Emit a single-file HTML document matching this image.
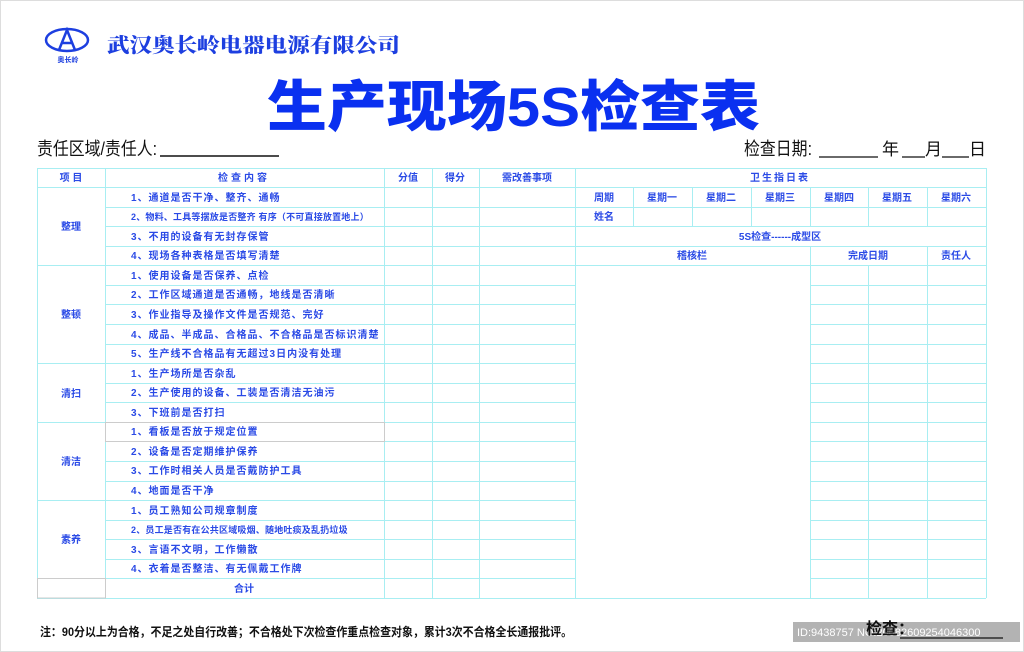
<!DOCTYPE html>
<html><head><meta charset="utf-8"><style>
html,body{margin:0;padding:0;background:#fff;}
svg{display:block}
.t{font-family:"Liberation Sans","Noto Sans CJK SC",sans-serif;fill:#2a4ae6;font-size:10px;font-weight:bold}
.c{text-anchor:middle}
</style></head><body>
<svg width="1024" height="652" viewBox="0 0 1024 652" xmlns="http://www.w3.org/2000/svg">
<rect x="0" y="0" width="1024" height="652" fill="#fff"/>
<rect x="0.5" y="0.5" width="1023" height="651" fill="none" stroke="#ddd"/>
<!-- logo -->
<ellipse cx="67" cy="40" rx="21" ry="11" fill="none" stroke="#1d3fe0" stroke-width="2.5"/>
<path d="M59 50 L67 30 L75 50 M62 43 L72 43" fill="none" stroke="#1d3fe0" stroke-width="2.5"/>
<text x="68" y="62" class="c" style="font-family:'Noto Sans CJK SC',sans-serif;font-size:7px;fill:#1d3fe0;font-weight:bold">奥长岭</text>
<text x="107" y="52" style="font-family:'Noto Serif CJK SC',serif;font-size:20px;font-weight:900;fill:#1d3fe0" textLength="293" lengthAdjust="spacingAndGlyphs">武汉奥长岭电器电源有限公司</text>
<text x="267" y="126" style="font-family:'Liberation Sans','Noto Sans CJK SC',sans-serif;font-size:55px;font-weight:900;fill:#0a30f0" textLength="493" lengthAdjust="spacingAndGlyphs">生产现场5S检查表</text>
<text x="37" y="155" style="font-family:'Liberation Sans','Noto Sans CJK SC',sans-serif;font-size:18px;fill:#111" textLength="120" lengthAdjust="spacingAndGlyphs">责任区域/责任人:</text>
<line x1="160" y1="156" x2="279" y2="156" stroke="#111" stroke-width="1.5"/>
<text x="744" y="155" style="font-family:'Liberation Sans','Noto Sans CJK SC',sans-serif;font-size:18px;fill:#111" textLength="68" lengthAdjust="spacingAndGlyphs">检查日期:</text>
<line x1="819" y1="157" x2="878" y2="157" stroke="#111" stroke-width="1.2"/>
<text x="882" y="155" style="font-family:'Noto Sans CJK SC',sans-serif;font-size:17px;fill:#111">年</text>
<line x1="902" y1="157" x2="925" y2="157" stroke="#111" stroke-width="1.2"/>
<text x="925" y="155" style="font-family:'Noto Sans CJK SC',sans-serif;font-size:17px;fill:#111">月</text>
<line x1="942" y1="157" x2="969" y2="157" stroke="#111" stroke-width="1.2"/>
<text x="969" y="155" style="font-family:'Noto Sans CJK SC',sans-serif;font-size:17px;fill:#111">日</text>

<g stroke="#a8eef2" stroke-width="1" fill="none">
<line x1="37" y1="168.5" x2="986" y2="168.5"/>
<line x1="37" y1="187.5" x2="986" y2="187.5"/>
<line x1="37" y1="598.5" x2="986" y2="598.5"/>
<path d="M105 207.5H575M105 226.5H575M105 246.5H575M37 265.5H575M105 285.5H575M105 304.5H575M105 324.5H575M105 344.5H575M37 363.5H575M105 383.5H575M105 402.5H575M37 422.5H575M105 441.5H575M105 461.5H575M105 481.5H575M37 500.5H575M105 520.5H575M105 539.5H575M105 559.5H575M37 578.5H575"/>
<path d="M575 207.5H986M575 226.5H986M575 246.5H986M575 265.5H986"/>
<path d="M810 285.5H986M810 304.5H986M810 324.5H986M810 344.5H986M810 363.5H986M810 383.5H986M810 402.5H986M810 422.5H986M810 441.5H986M810 461.5H986M810 481.5H986M810 500.5H986M810 520.5H986M810 539.5H986M810 559.5H986M810 578.5H986"/>
<path d="M37.5 168V598M105.5 168V598M384.5 168V598M432.5 168V598M479.5 168V598M575.5 168V598M986.5 168V598"/>
<path d="M633.5 187V226M692.5 187V226M751.5 187V226M810.5 187V226M868.5 187V226M927.5 187V226"/>
<path d="M810.5 246V598M927.5 246V598M868.5 265V598"/>
</g>
<rect x="105.5" y="422.5" width="279" height="19" fill="none" stroke="#ccc"/>
<rect x="37.5" y="578.5" width="68" height="19.5" fill="none" stroke="#ccc"/>

<text class="t c" x="71" y="181">项 目</text>
<text class="t c" x="244" y="181" style="letter-spacing:3px">检查内容</text>
<text class="t c" x="408" y="181">分值</text>
<text class="t c" x="455" y="181">得分</text>
<text class="t c" x="527" y="181">需改善事项</text>
<text class="t c" x="780" y="181" style="letter-spacing:2px">卫生指日表</text>
<text class="t c" x="604" y="201">周期</text>
<text class="t c" x="662" y="201">星期一</text>
<text class="t c" x="721" y="201">星期二</text>
<text class="t c" x="780" y="201">星期三</text>
<text class="t c" x="839" y="201">星期四</text>
<text class="t c" x="897" y="201">星期五</text>
<text class="t c" x="956" y="201">星期六</text>
<text class="t c" x="604" y="220">姓名</text>
<text class="t c" x="780" y="240">5S检查------成型区</text>
<text class="t c" x="692" y="259">稽核栏</text>
<text class="t c" x="868" y="259">完成日期</text>
<text class="t c" x="956" y="259">责任人</text>

<text class="t c" x="71" y="230">整理</text>
<text class="t c" x="71" y="318">整顿</text>
<text class="t c" x="71" y="397">清扫</text>
<text class="t c" x="71" y="465">清洁</text>
<text class="t c" x="71" y="543">素养</text>

<g style="letter-spacing:1px">
<text class="t" x="131" y="201">1、通道是否干净、整齐、通畅</text>
<text class="t" x="131" y="220" style="font-size:9px;letter-spacing:0.2px">2、物料、工具等摆放是否整齐 有序（不可直接放置地上）</text>
<text class="t" x="131" y="240">3、不用的设备有无封存保管</text>
<text class="t" x="131" y="259">4、现场各种表格是否填写清楚</text>
<text class="t" x="131" y="279">1、使用设备是否保养、点检</text>
<text class="t" x="131" y="298">2、工作区域通道是否通畅，地线是否清晰</text>
<text class="t" x="131" y="318">3、作业指导及操作文件是否规范、完好</text>
<text class="t" x="131" y="338">4、成品、半成品、合格品、不合格品是否标识清楚</text>
<text class="t" x="131" y="357">5、生产线不合格品有无超过3日内没有处理</text>
<text class="t" x="131" y="377">1、生产场所是否杂乱</text>
<text class="t" x="131" y="396">2、生产使用的设备、工装是否清洁无油污</text>
<text class="t" x="131" y="416">3、下班前是否打扫</text>
<text class="t" x="131" y="435">1、看板是否放于规定位置</text>
<text class="t" x="131" y="455">2、设备是否定期维护保养</text>
<text class="t" x="131" y="474">3、工作时相关人员是否戴防护工具</text>
<text class="t" x="131" y="494">4、地面是否干净</text>
<text class="t" x="131" y="514">1、员工熟知公司规章制度</text>
<text class="t" x="131" y="533" style="font-size:9px;letter-spacing:0.2px">2、员工是否有在公共区域吸烟、随地吐痰及乱扔垃圾</text>
<text class="t" x="131" y="553">3、言语不文明，工作懒散</text>
<text class="t" x="131" y="572">4、衣着是否整洁、有无佩戴工作牌</text>
</g>
<text class="t c" x="244" y="592">合计</text>

<text x="40" y="636" style="font-family:'Liberation Sans','Noto Sans CJK SC',sans-serif;font-size:12px;font-weight:bold;fill:#111" textLength="532" lengthAdjust="spacingAndGlyphs">注：90分以上为合格，不足之处自行改善；不合格处下次检查作重点检查对象，累计3次不合格全长通报批评。</text>
<rect x="793" y="622" width="227" height="20" fill="#999" opacity="0.75"/>
<text x="797" y="636" style="font-family:'Liberation Sans',sans-serif;font-size:11px;fill:#fff">ID:9438757 NO:20082609254046300</text>
<text x="866" y="634" style="font-family:'Noto Sans CJK SC',sans-serif;font-size:16px;font-weight:bold;fill:#111">检查：</text>
<line x1="900" y1="638" x2="1003" y2="638" stroke="#111" stroke-width="1.2"/>
</svg>
</body></html>
